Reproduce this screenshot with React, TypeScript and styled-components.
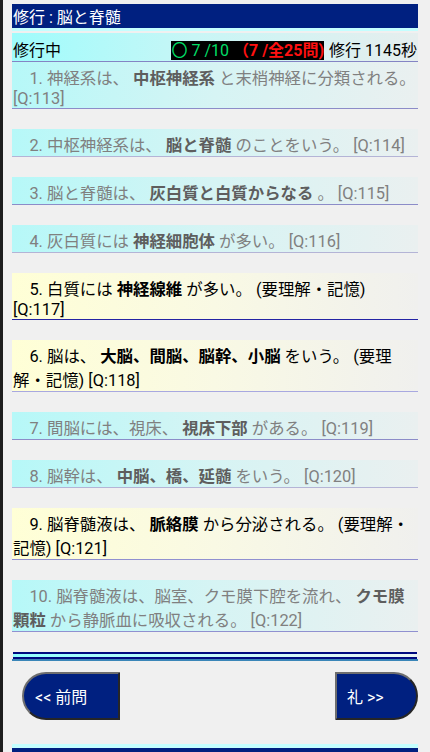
import React from "react";
import styled, { createGlobalStyle } from "styled-components";

const GlobalStyle = createGlobalStyle`
  html, body {
    margin: 0;
    padding: 0;
    background: #f0f0f0;
  }
  body {
    font-family: Roboto, "Noto Sans CJK JP", sans-serif;
    font-size: 16px;
  }
`;

const Frame = styled.div`
  min-height: 752px;
  box-sizing: border-box;
  border-left: 3px solid #1e1e1e;
  background: #f0f0f0;
  padding: 4px 12px 0 9px;
  display: flex;
  flex-direction: column;
`;

const TitleBar = styled.div`
  background: #002080;
  color: #ffffff;
  box-sizing: border-box;
  height: 27px;
  padding: 0 1px;
  line-height: normal;
  white-space: nowrap;
  border-bottom: 3px solid #c4ffff;
`;

const StatusRow = styled.div`
  margin-top: 2px;
  display: flex;
  justify-content: space-between;
  align-items: baseline;
  padding: 4px 1px 0;
  background: linear-gradient(90deg, #9ffcfc 0%, #c8f6f6 45%, #e6eeee 100%);
  border-bottom: 1px solid #8484c4;
  color: #000;
`;

const Score = styled.span`
  background: #000;
`;

const Ok = styled.span`
  color: #00dd66;
`;

const Total = styled.span`
  color: #ff1010;
  font-weight: 700;
`;

const Timer = styled.span`
  margin-left: 5px;
`;

const List = styled.div`
  display: flex;
  flex-direction: column;
  gap: 20px;
`;

const Item = styled.div<{ $active: boolean; $line: string }>`
  padding: 3px 0 0 1px;
  font-size: 16.4px;
  line-height: normal;
  text-indent: 1em;
  color: ${(p) => (p.$active ? "#000" : "#808080")};
  background: ${(p) =>
    p.$active
      ? "linear-gradient(90deg, #ffffd6 0%, #f9f9e4 50%, #f0f0ee 100%)"
      : "linear-gradient(90deg, #b6f8f8 0%, #d6f4f4 50%, #eaf0f0 100%)"};
  border-bottom: 1px solid ${(p) => p.$line};
`;

const Key = styled.b<{ $active: boolean }>`
  font-weight: 700;
  color: ${(p) => (p.$active ? "#000" : "#5e5e5e")};
`;

const Divider = styled.div`
  margin-top: 20px;
  display: flex;
  flex-direction: column;
`;

const NavyRule = styled.div`
  height: 2px;
  margin: 0 1px;
  background: #000a80;
`;

const CyanRule = styled.div`
  height: 3px;
  margin: 0 1px;
  background: linear-gradient(90deg, #90ffff 0%, #c8fafa 50%, #e8f4f4 100%);
`;

const SteelRule = styled.div`
  height: 2px;
  background: #3a86b8;
`;

const ButtonRow = styled.div`
  margin-top: 11px;
  display: flex;
  justify-content: space-between;
  padding-left: 10px;
`;

const NavButton = styled.button<{ $side: "left" | "right" }>`
  height: 48px;
  box-sizing: border-box;
  background: #002080;
  color: #fff;
  font-family: Roboto, "Noto Sans CJK JP", sans-serif;
  font-size: 16px;
  text-align: left;
  border: 2px solid;
  border-color: #6e6e6e #262626 #262626 #6e6e6e;
  border-radius: ${(p) => (p.$side === "left" ? "24px 0 0 24px" : "0 24px 24px 0")};
  width: ${(p) => (p.$side === "left" ? "98px" : "83px")};
  padding: ${(p) => (p.$side === "left" ? "0 0 0 11px" : "0 0 0 10px")};
  cursor: pointer;
`;

const BottomBar = styled.div`
  margin-top: 24px;
  height: 8px;
  border-top: 4px solid #c4ffff;
  background: #002080;
`;

type Part = string | { b: string };
type Q = { parts: Part[]; active: boolean; line: string };

const questions: Q[] = [
  { parts: ["1. 神経系は、 ", { b: "中枢神経系" }, " と末梢神経に分類される。 [Q:113]"], active: false, line: "#8c8cc8" },
  { parts: ["2. 中枢神経系は、 ", { b: "脳と脊髄" }, " のことをいう。 [Q:114]"], active: false, line: "#b4b4d6" },
  { parts: ["3. 脳と脊髄は、 ", { b: "灰白質と白質からなる" }, " 。 [Q:115]"], active: false, line: "#8c8cc8" },
  { parts: ["4. 灰白質には ", { b: "神経細胞体" }, " が多い。 [Q:116]"], active: false, line: "#b4b4d6" },
  { parts: ["5. 白質には ", { b: "神経線維" }, " が多い。 (要理解・記憶) [Q:117]"], active: true, line: "#2424a4" },
  { parts: ["6. 脳は、 ", { b: "大脳、間脳、脳幹、小脳" }, " をいう。 (要理解・記憶) [Q:118]"], active: true, line: "#a8a8e0" },
  { parts: ["7. 間脳には、視床、 ", { b: "視床下部" }, " がある。 [Q:119]"], active: false, line: "#8c8cc8" },
  { parts: ["8. 脳幹は、 ", { b: "中脳、橋、延髄" }, " をいう。 [Q:120]"], active: false, line: "#b4b4d6" },
  { parts: ["9. 脳脊髄液は、 ", { b: "脈絡膜" }, " から分泌される。 (要理解・記憶) [Q:121]"], active: true, line: "#9090d0" },
  { parts: ["10. 脳脊髄液は、脳室、クモ膜下腔を流れ、 ", { b: "クモ膜顆粒" }, " から静脈血に吸収される。 [Q:122]"], active: false, line: "#9090d0" },
];

export default function App() {
  return (
    <>
      <GlobalStyle />
      <Frame>
        <TitleBar>修行 : 脳と脊髄</TitleBar>
        <StatusRow>
          <span>修行中</span>
          <span>
            <Score>
              <Ok>〇 7 /10</Ok> <Total>（7 /全25問)</Total>
            </Score>
            <Timer>修行 1145秒</Timer>
          </span>
        </StatusRow>
        <List>
          {questions.map((q, i) => (
            <Item key={i} $active={q.active} $line={q.line}>
              {q.parts.map((p, j) =>
                typeof p === "string" ? (
                  <React.Fragment key={j}>{p}</React.Fragment>
                ) : (
                  <Key key={j} $active={q.active}>
                    {p.b}
                  </Key>
                )
              )}
            </Item>
          ))}
        </List>
        <Divider>
          <NavyRule />
          <CyanRule />
          <NavyRule />
          <SteelRule />
        </Divider>
        <ButtonRow>
          <NavButton $side="left">&lt;&lt; 前問</NavButton>
          <NavButton $side="right">礼 &gt;&gt;</NavButton>
        </ButtonRow>
        <BottomBar />
      </Frame>
    </>
  );
}
